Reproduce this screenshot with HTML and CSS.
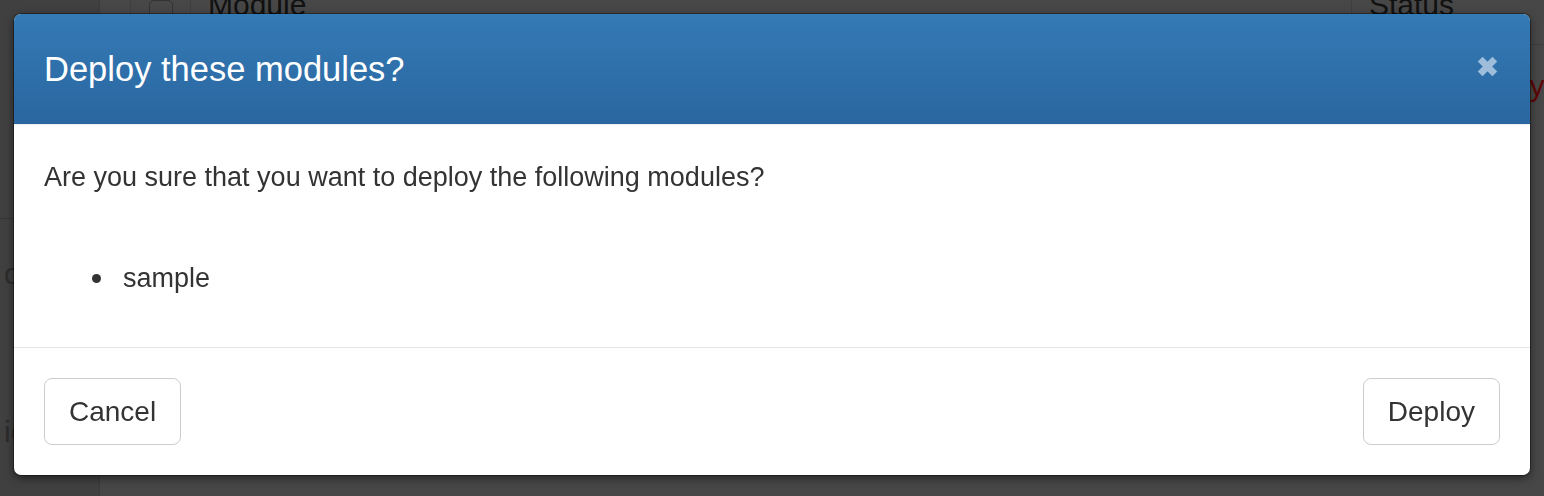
FILE: index.html
```html
<html lang="en">
<head>
    <meta charset="UTF-8">
    <title>Deploy modules</title>
    <link rel="stylesheet" href="styles.css">
</head>
<body>
    <div class="page">
        <div class="sidebar">
            <div class="sidebar-top"></div>
            <div class="sidebar-item">o</div>
            <div class="sidebar-item low">ic</div>
        </div>
        <div class="main">
            <div class="table-head">
                <div class="col-check"><span class="checkbox"></span></div>
                <div class="col-module">Module</div>
                <div class="col-status">Status</div>
            </div>
            <div class="table-row">
                <div class="col-status error">Deploy</div>
            </div>
        </div>
    </div>

    <div class="backdrop">
        <div class="modal">
            <div class="modal-header">
                <h2>Deploy these modules?</h2>
                <button class="close" type="button" aria-label="Close">
                    <svg width="23" height="23" viewBox="0 0 22 22">
                        <path d="M4 4 L18 18 M18 4 L4 18" stroke="#9ebdda" stroke-width="6.5" fill="none"/>
                    </svg>
                </button>
            </div>
            <div class="modal-body">
                <p>Are you sure that you want to deploy the following modules?</p>
                <ul>
                    <li>sample</li>
                </ul>
            </div>
            <div class="modal-footer">
                <button class="btn" type="button">Cancel</button>
                <button class="btn" type="button">Deploy</button>
            </div>
        </div>
    </div>
</body>
</html>
```

FILE: styles.css
```css
html, body {
    margin: 0;
    padding: 0;
    height: 100%;
    overflow: hidden;
}
body {
    font-family: "Liberation Sans", Arial, sans-serif;
    background-color: #474747;
    color: #333;
}
.page {
    display: flex;
    height: 100%;
}
.sidebar {
    width: 99px;
    flex-shrink: 0;
    background: #404040;
    border-right: 1px solid #3b3b3b;
    color: #2c2c2c;
    font-size: 30px;
}
.sidebar-top {
    height: 218px;
    border-bottom: 1px solid #363636;
}
.sidebar-item {
    padding: 38px 0 0 4px;
    line-height: 34px;
}
.sidebar-item.low {
    padding-top: 124px;
}
.main {
    flex: 1;
}
.table-head {
    display: flex;
    height: 62px;
    margin-top: -18px;
    border-bottom: 1px solid #3e3e3e;
    font-size: 30px;
    color: #111;
}
.col-check {
    width: 59px;
    margin-left: 30px;
    display: flex;
    justify-content: center;
    border-left: 1px solid #3f3f3f;
    border-right: 1px solid #3f3f3f;
}
.checkbox {
    display: block;
    width: 22px;
    height: 28px;
    margin-top: 18px;
    border: 1px solid #333;
    border-radius: 5px;
}
.col-module {
    flex: 1;
    padding: 6px 0 0 17px;
}
.table-head .col-status {
    width: 175px;
    padding: 6px 0 0 17px;
    border-left: 1px solid #3f3f3f;
}
.table-row {
    display: flex;
    justify-content: flex-end;
    height: 60px;
    font-size: 30px;
    line-height: 34px;
}
.table-row .col-status {
    width: 192px;
    box-sizing: border-box;
    padding: 24px 0 0 99px;
    white-space: nowrap;
    overflow: hidden;
}
.error {
    color: #5e0606;
}

.backdrop {
    position: fixed;
    inset: 0;
    padding: 14px 14px 0 14px;
}
.modal {
    height: 461px;
    display: flex;
    flex-direction: column;
    background: #fff;
    border-radius: 7px;
    box-shadow: 0 0 0 1px rgba(0, 0, 0, 0.35), 0 3px 10px rgba(0, 0, 0, 0.5);
    overflow: hidden;
}
.modal-header {
    height: 111px;
    box-sizing: border-box;
    display: flex;
    align-items: center;
    justify-content: space-between;
    padding: 0 31px 0 30px;
    background: linear-gradient(to bottom, #347ab5 0%, #2a66a0 100%);
    border-bottom: 1px solid #e8eef4;
}
.modal-header h2 {
    margin: 0;
    font-size: 34.5px;
    font-weight: normal;
    color: #fff;
    line-height: 38px;
}
.close {
    background: none;
    border: none;
    padding: 0;
    margin-bottom: 6px;
    display: flex;
}
.modal-body {
    height: 222px;
    box-sizing: border-box;
    padding: 33px 30px 0 30px;
    font-size: 27px;
    line-height: 38px;
}
.modal-body p {
    margin: 0 0 63px 0;
}
.modal-body ul {
    margin: 0;
    padding-left: 48px;
    list-style: none;
}
.modal-body li {
    display: flex;
    align-items: center;
}
.modal-body li::before {
    content: "";
    width: 9px;
    height: 9px;
    margin-right: 22px;
    border-radius: 50%;
    background: #333;
}
.modal-footer {
    flex: 1;
    display: flex;
    justify-content: space-between;
    align-items: flex-start;
    padding: 30px 30px 0 30px;
    border-top: 1px solid #e5e5e5;
}
.btn {
    font-family: "Liberation Sans", Arial, sans-serif;
    font-size: 28px;
    line-height: 33px;
    padding: 16px 24px;
    color: #333;
    background: #fff;
    border: 1px solid #ccc;
    border-radius: 8px;
}
```
